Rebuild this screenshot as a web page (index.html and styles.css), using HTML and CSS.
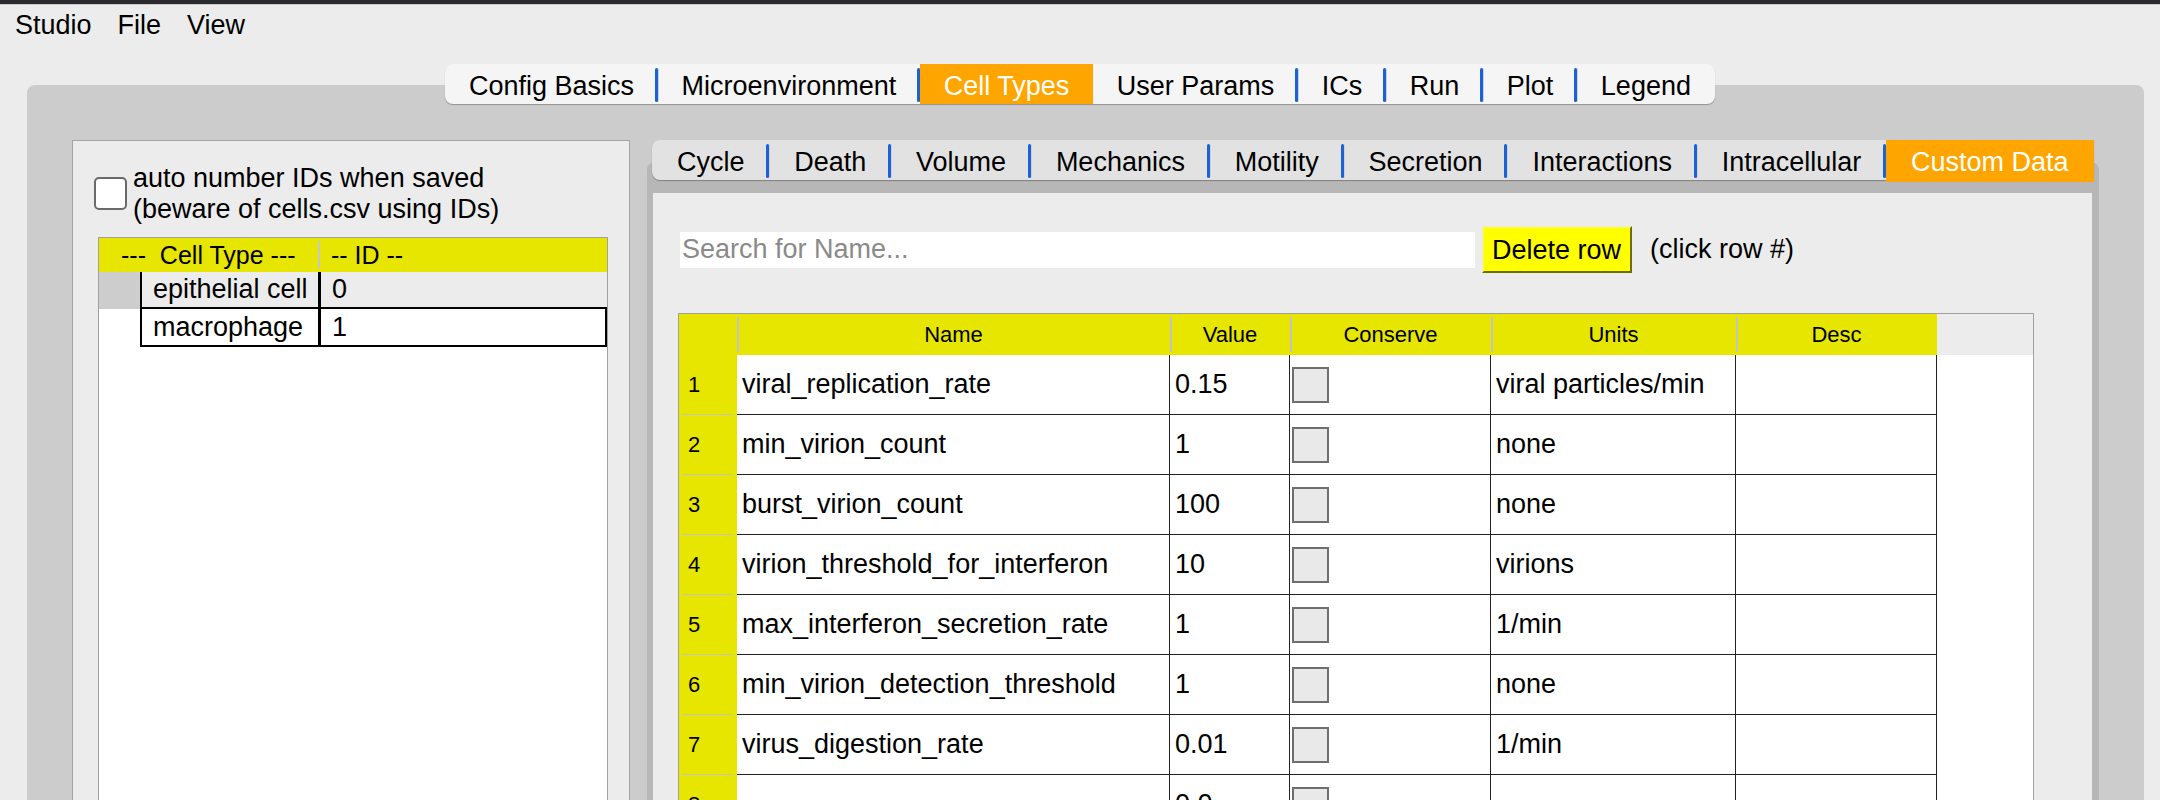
FILE: index.html
```html
<!DOCTYPE html>
<html lang="en">
<head>
<meta charset="utf-8">
<title>PhysiCell Studio</title>
<link rel="stylesheet" href="styles.css">
</head>
<body>
<div class="titlebar"></div>
<nav class="menubar"><span>Studio</span><span>File</span><span>View</span></nav>

<main class="studio">
  <div class="tabbar main-tabs">
    <span class="tab sep">Config Basics</span>
    <span class="tab sep">Microenvironment</span>
    <span class="tab active">Cell Types</span>
    <span class="tab sep">User Params</span>
    <span class="tab sep">ICs</span>
    <span class="tab sep">Run</span>
    <span class="tab sep">Plot</span>
    <span class="tab">Legend</span>
  </div>

  <section class="pane">
    <aside class="celltypes">
      <label class="autonum">
        <span class="checkbox"></span>
        <span class="autonum-text">auto number IDs when saved<br>(beware of cells.csv using IDs)</span>
      </label>
      <div class="typelist">
        <div class="typehead">
          <span class="th-type">---  Cell Type ---</span>
          <span class="th-id">-- ID --</span>
        </div>
        <div class="typerow selected">
          <span class="rowhdr"></span>
          <span class="tcell tname">epithelial cell</span>
          <span class="tcell tid">0</span>
        </div>
        <div class="typerow last">
          <span class="rowhdr"></span>
          <span class="tcell tname">macrophage</span>
          <span class="tcell tid">1</span>
        </div>
      </div>
    </aside>

    <div class="tabwidget">
      <div class="tabbar sub-tabs">
        <span class="tab sep">Cycle</span>
        <span class="tab sep">Death</span>
        <span class="tab sep">Volume</span>
        <span class="tab sep">Mechanics</span>
        <span class="tab sep">Motility</span>
        <span class="tab sep">Secretion</span>
        <span class="tab sep">Interactions</span>
        <span class="tab sep">Intracellular</span>
        <span class="tab active">Custom Data</span>
      </div>
      <div class="frame">
        <div class="content">
          <div class="searchrow">
            <input class="search" type="text" placeholder="Search for Name...">
            <button class="delete" type="button">Delete row</button>
            <span class="hint">(click row #)</span>
          </div>

          <div class="grid">
            <div class="gh"></div>
            <div class="gh div">Name</div>
            <div class="gh div">Value</div>
            <div class="gh div">Conserve</div>
            <div class="gh div">Units</div>
            <div class="gh div">Desc</div>
            <div class="gh blank"></div>

            <div class="rn">1</div><div class="c">viral_replication_rate</div><div class="c">0.15</div><div class="c"><span class="cb"></span></div><div class="c">viral particles/min</div><div class="c"></div><div class="pad"></div>
            <div class="rn">2</div><div class="c">min_virion_count</div><div class="c">1</div><div class="c"><span class="cb"></span></div><div class="c">none</div><div class="c"></div><div class="pad"></div>
            <div class="rn">3</div><div class="c">burst_virion_count</div><div class="c">100</div><div class="c"><span class="cb"></span></div><div class="c">none</div><div class="c"></div><div class="pad"></div>
            <div class="rn">4</div><div class="c">virion_threshold_for_interferon</div><div class="c">10</div><div class="c"><span class="cb"></span></div><div class="c">virions</div><div class="c"></div><div class="pad"></div>
            <div class="rn">5</div><div class="c">max_interferon_secretion_rate</div><div class="c">1</div><div class="c"><span class="cb"></span></div><div class="c">1/min</div><div class="c"></div><div class="pad"></div>
            <div class="rn">6</div><div class="c">min_virion_detection_threshold</div><div class="c">1</div><div class="c"><span class="cb"></span></div><div class="c">none</div><div class="c"></div><div class="pad"></div>
            <div class="rn">7</div><div class="c">virus_digestion_rate</div><div class="c">0.01</div><div class="c"><span class="cb"></span></div><div class="c">1/min</div><div class="c"></div><div class="pad"></div>
            <div class="rn">8</div><div class="c"></div><div class="c">0.0</div><div class="c"><span class="cb"></span></div><div class="c"></div><div class="c"></div><div class="pad"></div>
          </div>
        </div>
      </div>
    </div>
  </section>
</main>
</body>
</html>
```

FILE: styles.css
```css
* { box-sizing: border-box; }

html, body {
  margin: 0;
  height: 800px;
  overflow: hidden;
}

body {
  background: #ececec;
  color: #000;
  font-family: "Liberation Sans", Arial, sans-serif;
  font-size: 27px;
}

/* window chrome */
.titlebar {
  height: 5px;
  background: #2b2b2f;
  border-bottom: 1px solid #c9c9c9;
}

.menubar {
  display: flex;
  gap: 26px;
  padding-left: 15px;
  height: 40px;
  line-height: 40px;
}

.studio { padding-top: 19px; }

/* tab bars */
.tabbar {
  display: flex;
  width: max-content;
  height: 40px;
  position: relative;
  z-index: 1;
}

.tab {
  position: relative;
  padding-top: 4px;
  line-height: 36px;
  white-space: nowrap;
}

.tab.sep::after {
  content: "";
  position: absolute;
  right: 0;
  top: 4px;
  bottom: 2px;
  width: 3px;
  border-radius: 3px;
  background: #1b62d6;
  box-shadow: 1px 0 0 #d0d0d0;
}

.tab.active {
  background: #ffa500;
  color: #fff;
}

.main-tabs {
  margin: 0 auto;
  background: #f5f5f5;
  border-radius: 8px;
  box-shadow: 0 1px 1px rgba(0, 0, 0, 0.28);
}

.main-tabs .tab { padding-left: 23.75px; padding-right: 23.75px; }
.main-tabs .tab:first-child { border-radius: 8px 0 0 8px; }

.sub-tabs {
  margin-left: 5px;
  background: #e2e2e2;
  border-radius: 8px 0 0 8px;
  box-shadow: 0 1px 1px rgba(0, 0, 0, 0.3);
}

.sub-tabs .tab { padding-left: 24.9px; padding-right: 24.9px; }
.sub-tabs .tab:first-child { border-radius: 8px 0 0 8px; }
.sub-tabs .tab.active { height: 42px; }

/* grey group pane */
.pane {
  display: flex;
  gap: 17px;
  height: 760px;
  margin: -19px 16px 0 27px;
  padding: 55px 45px 0;
  background: #cccccc;
  border-radius: 8px 8px 0 0;
}

/* left: cell type list */
.celltypes {
  width: 558px;
  flex: none;
  height: 700px;
  padding-top: 22px;
  background: #ececec;
  border: 1px solid #a4a4a4;
}

.autonum {
  display: flex;
  align-items: flex-start;
  margin-left: 21px;
  line-height: 31px;
}

.checkbox {
  width: 33px;
  height: 33px;
  margin: 14px 6px 0 0;
  flex: none;
  background: #fff;
  border: 2px solid #6a6a6a;
  border-radius: 5px;
}

.typelist {
  width: 510px;
  height: 600px;
  margin: 12px 0 0 25px;
  background: #fff;
  border: 1px solid #a0a0a0;
}

.typehead {
  display: flex;
  height: 34px;
  line-height: 34px;
  background: #e6e600;
  font-size: 25px;
  white-space: pre;
}

.th-type {
  position: relative;
  width: 221px;
  padding-left: 22px;
}

.th-type::after {
  content: "";
  position: absolute;
  right: 0;
  top: 3px;
  bottom: 3px;
  width: 2px;
  background: #c8c8c8;
}

.th-id { padding-left: 11px; }

.typerow {
  display: flex;
  height: 37px;
  line-height: 35px;
}

.typerow.last { height: 38px; line-height: 36px; }

.rowhdr { width: 41px; flex: none; }
.typerow.selected .rowhdr { background: #cdcdcd; }
.typerow.selected .tcell { background: #ececec; }

.tcell {
  border-bottom: 2px solid #000;
  padding-left: 11px;
}

.tname {
  width: 181px;
  flex: none;
  border-left: 2px solid #000;
  border-right: 3px solid #000;
}

.tid { flex: 1; }
.typerow.last .tid { border-right: 2px solid #000; }

/* right: cell-type tab widget */
.tabwidget {
  width: 1452px;
  flex: none;
}

.frame {
  margin-top: -18px;
  padding: 31px 7px 0 6px;
  background: #b7b7b7;
  border-radius: 8px 8px 0 0;
}

.content {
  height: 620px;
  padding: 33px 0 0 27px;
  background: #ececec;
}

.searchrow {
  display: flex;
  align-items: center;
  height: 47px;
}

.search {
  width: 795px;
  height: 36px;
  padding: 0 2px;
  border: none;
  outline: none;
  background: #fff;
  font: inherit;
}

.search::placeholder { color: #8a8a8a; }

.delete {
  width: 150px;
  height: 47px;
  margin-left: 7px;
  padding: 2px 0 0 8px;
  text-align: left;
  font: inherit;
  color: #000;
  background: #ffff00;
  border: 2px solid;
  border-color: #f4f48a #6e6e00 #6e6e00 #f4f48a;
}

.hint { margin-left: 18px; }

/* custom data table */
.grid {
  display: grid;
  grid-template-columns: 58px 433px 120px 201px 245px 201px 96px;
  grid-template-rows: 41px repeat(8, 60px);
  width: 1356px;
  margin: 40px 0 0 -2px;
  background: #fff;
  border: 1px solid #a0a0a0;
  border-bottom: none;
}

.gh {
  position: relative;
  background: #e6e600;
  font-size: 22px;
  line-height: 41px;
  text-align: center;
}

.gh.blank { background: #ececec; }

.gh.div::before {
  content: "";
  position: absolute;
  left: 0;
  top: 3px;
  bottom: 3px;
  width: 2px;
  background: #c4c4c4;
}

.rn {
  position: relative;
  background: #e6e600;
  font-size: 22px;
  line-height: 60px;
  padding-left: 9px;
}

.rn::after {
  content: "";
  position: absolute;
  left: 3px;
  right: 4px;
  bottom: -1px;
  height: 2px;
  background: #c4c4c4;
}

.c {
  display: flex;
  align-items: center;
  padding-left: 5px;
  border-right: 1px solid #222;
  border-bottom: 1px solid #222;
  white-space: nowrap;
}

.cb {
  width: 37px;
  height: 36px;
  margin-left: -3px;
  background: #e9e9e9;
  border: 2px solid #6e6e6e;
}
```
